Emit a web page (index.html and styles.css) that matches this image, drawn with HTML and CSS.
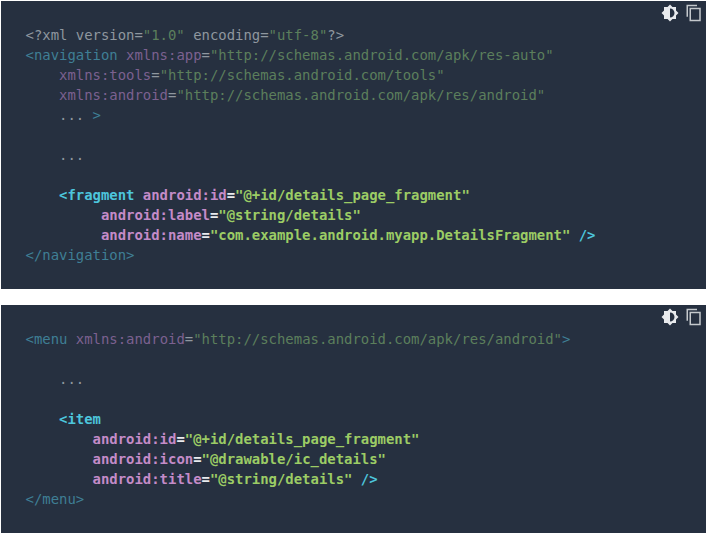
FILE: index.html
```html
<!DOCTYPE html>
<html lang="en">
<head>
<meta charset="utf-8">
<title>Code samples</title>
<link rel="stylesheet" href="styles.css">
</head>
<body>
<main class="page">
<section class="block block-nav">
<div class="tools">
<svg class="icon" width="18" height="18" viewBox="0 0 24 24"><path fill="#e8eaed" d="M20 8.69V4h-4.69L12 .69 8.69 4H4v4.69L.69 12 4 15.31V20h4.69L12 23.31 15.31 20H20v-4.69L23.31 12 20 8.69zM12 18V6c3.31 0 6 2.69 6 6s-2.69 6-6 6z"/></svg>
<svg class="icon" width="18" height="18" viewBox="0 0 24 24"><path fill="#c4c8cc" d="M16 1H2v16h2V3h12V1zm5 4H6v18h15V5zm-2 16H8V7h11v14z"/></svg>
</div>
<pre class="code"><span class="dim">&lt;?xml version=<span class="str">"1.0"</span> encoding=<span class="str">"utf-8"</span>?&gt;</span>
<span class="dim"><span class="tag">&lt;navigation</span> <span class="attr">xmlns:app</span>=<span class="str">"http://schemas.android.com/apk/res-auto"</span></span>
<span class="dim">    <span class="attr">xmlns:tools</span>=<span class="str">"http://schemas.android.com/tools"</span></span>
<span class="dim">    <span class="attr">xmlns:android</span>=<span class="str">"http://schemas.android.com/apk/res/android"</span></span>
<span class="dim">    ... <span class="tag">&gt;</span></span>

<span class="dim">    ...</span>

    <span class="hl"><span class="hl-tag">&lt;fragment</span> <span class="hl-attr">android:id</span>=<span class="hl-str">"@+id/details_page_fragment"</span></span>
         <span class="hl"><span class="hl-attr">android:label</span>=<span class="hl-str">"@string/details"</span></span>
         <span class="hl"><span class="hl-attr">android:name</span>=<span class="hl-str">"com.example.android.myapp.DetailsFragment"</span> <span class="hl-tag">/&gt;</span></span>
<span class="dim tag">&lt;/navigation&gt;</span></pre>
</section>
<section class="block block-menu">
<div class="tools">
<svg class="icon" width="18" height="18" viewBox="0 0 24 24"><path fill="#e8eaed" d="M20 8.69V4h-4.69L12 .69 8.69 4H4v4.69L.69 12 4 15.31V20h4.69L12 23.31 15.31 20H20v-4.69L23.31 12 20 8.69zM12 18V6c3.31 0 6 2.69 6 6s-2.69 6-6 6z"/></svg>
<svg class="icon" width="18" height="18" viewBox="0 0 24 24"><path fill="#c4c8cc" d="M16 1H2v16h2V3h12V1zm5 4H6v18h15V5zm-2 16H8V7h11v14z"/></svg>
</div>
<pre class="code"><span class="dim"><span class="tag">&lt;menu</span> <span class="attr">xmlns:android</span>=<span class="str">"http://schemas.android.com/apk/res/android"</span><span class="tag">&gt;</span></span>

<span class="dim">    ...</span>

    <span class="hl"><span class="hl-tag">&lt;item</span></span>
        <span class="hl"><span class="hl-attr">android:id</span>=<span class="hl-str">"@+id/details_page_fragment"</span></span>
        <span class="hl"><span class="hl-attr">android:icon</span>=<span class="hl-str">"@drawable/ic_details"</span></span>
        <span class="hl"><span class="hl-attr">android:title</span>=<span class="hl-str">"@string/details"</span> <span class="hl-tag">/&gt;</span></span>
<span class="dim tag">&lt;/menu&gt;</span></pre>
</section>
</main>
</body>
</html>
```
FILE: styles.css
```css
html, body {
  margin: 0;
  padding: 0;
  background: #fff;
}
.page {
  display: flex;
  flex-direction: column;
  gap: 16px;
  padding: 1px 0 0 1px;
}
.block {
  background: #263040;
  box-sizing: border-box;
}
.block-nav { height: 288px; }
.block-menu { height: 228px; }
.tools {
  display: flex;
  justify-content: flex-end;
  gap: 6px;
  padding: 3px 3px 0 0;
  height: 21px;
}
.icon { display: block; }
.code {
  margin: 0;
  padding: 0 0 0 24.5px;
  font-family: "DejaVu Sans Mono", "Liberation Mono", monospace;
  font-size: 13.93px;
  line-height: 20px;
  color: #e8eaed;
}
.dim { color: #8f979f; }
.tag { color: #3f7f95; }
.attr { color: #7c6190; }
.str { color: #5c7f5c; }
.hl { font-weight: 700; color: #e8eaed; }
.hl-tag { color: #4dc5dc; }
.hl-attr { color: #c48bc8; }
.hl-str { color: #9ccc65; }
```
